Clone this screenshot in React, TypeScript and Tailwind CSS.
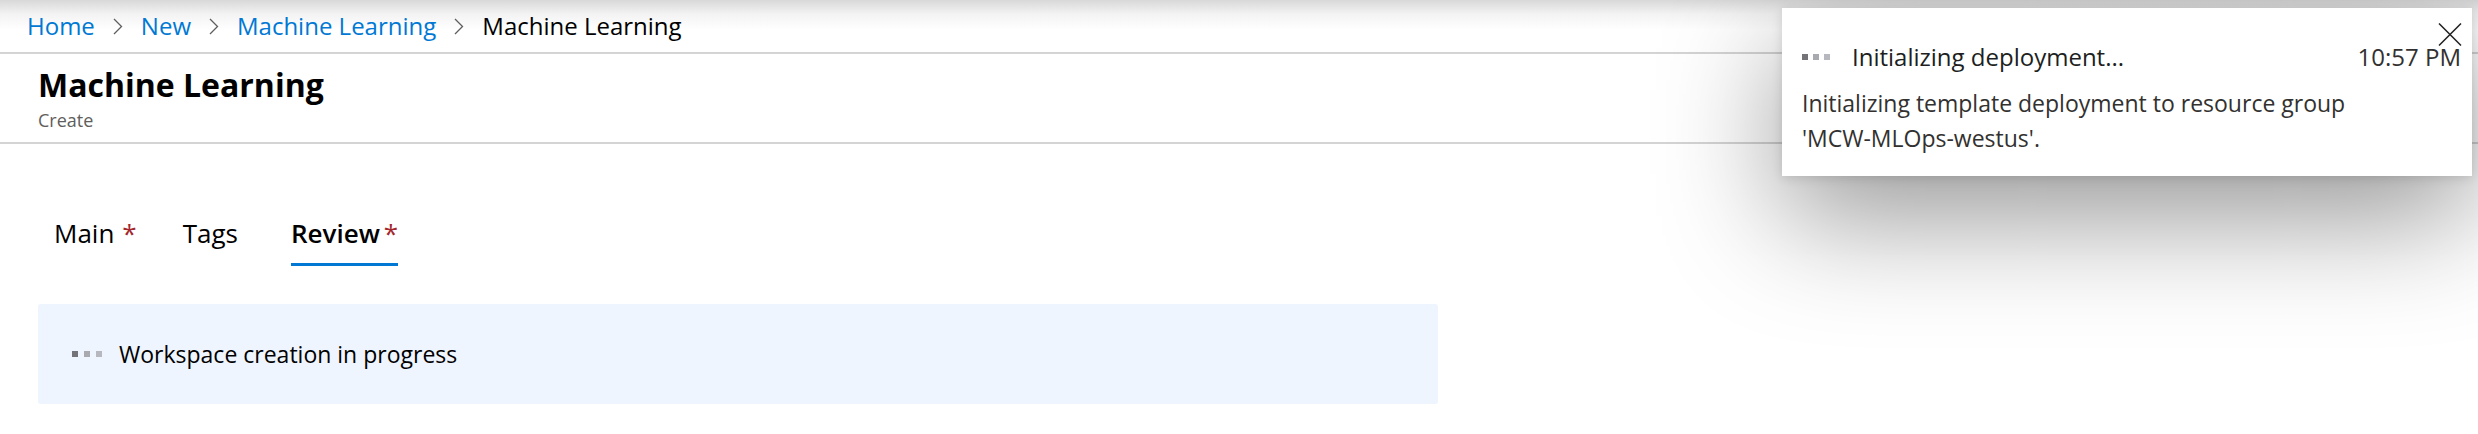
const crumbs = ["Home", "New", "Machine Learning"];

const tabs = [
  { label: "Main", required: true, active: false, cls: "", star: "ml-[8px]" },
  { label: "Tags", required: false, active: false, cls: "ml-[46px]", star: "" },
  { label: "Review", required: true, active: true, cls: "ml-[53px]", star: "ml-[4px]" },
];

function Chevron() {
  return (
    <svg width="10" height="17" viewBox="0 0 10 17" fill="none" className="shrink-0">
      <path d="M1 1 L8.5 8.5 L1 16" stroke="#605e5c" strokeWidth="1.3" />
    </svg>
  );
}

// loading indicator: three little squares, first one darker
function Dots({ size, gap }: { size: string; gap: string }) {
  return (
    <div className={`flex shrink-0 items-center ${gap}`}>
      <span className={`${size} bg-[#737378]`} />
      <span className={`${size} bg-[#a9a9b0]`} />
      <span className={`${size} bg-[#b7b8bf]`} />
    </div>
  );
}

export default function App() {
  return (
    <div className="relative h-[434px] w-full overflow-hidden bg-white font-['Open_Sans','Noto_Sans',sans-serif] text-black">
      {/* Breadcrumb */}
      <nav className="flex h-[54px] items-center gap-[18px] border-b-2 border-[#d4d4d4] bg-[linear-gradient(to_bottom,#d8d8d8_0px,#f3f3f3_14px,#ffffff_30px)] pl-[27px] text-[24px] leading-[32px]">
        {crumbs.map((c) => (
          <div key={c} className="flex items-center gap-[18px]">
            <span className="text-[#0078d4]">{c}</span>
            <Chevron />
          </div>
        ))}
        <span className="text-black">Machine Learning</span>
      </nav>

      {/* Title */}
      <header className="border-b-2 border-[#d4d4d4] pb-[10px] pl-[38px] pt-[11px]">
        <h1 className="text-[32px] font-bold leading-[40px]">Machine Learning</h1>
        <p className="mt-[3px] text-[18px] leading-[24px] text-[#605e5c]">Create</p>
      </header>

      {/* Tabs */}
      <div className="flex pl-[54px] pt-[71px]">
        {tabs.map((t) => (
          <div key={t.label} className={`flex flex-col ${t.cls}`}>
            <div className={`flex text-[26px] leading-[36px] ${t.active ? "font-semibold" : ""}`}>
              <span>{t.label}</span>
              {t.required && <span className={`font-normal text-[#a4262c] ${t.star}`}>*</span>}
            </div>
            <div className={`mt-[12px] h-[3px] ${t.active ? "bg-[#0078d4]" : "bg-transparent"}`} />
          </div>
        ))}
      </div>

      {/* Info bar */}
      <div className="ml-[38px] mt-[38px] flex h-[100px] w-[1400px] items-center rounded-[3px] bg-[#eef5fe] pl-[34px]">
        <Dots size="h-[6px] w-[6px]" gap="gap-[6px]" />
        <span className="ml-[17px] text-[23px] leading-[30px]">Workspace creation in progress</span>
      </div>

      {/* Toast */}
      <div className="absolute left-[1782px] top-[8px] h-[168px] w-[690px] bg-white pt-[31px] shadow-[0_40px_120px_rgba(0,0,0,0.42),0_2px_10px_rgba(0,0,0,0.12)]">
        <div className="flex items-center pl-[20px] pr-[11px]">
          <Dots size="h-[6px] w-[6px]" gap="gap-[5px]" />
          <span className="ml-[22px] text-[24px] leading-[36px] text-[#201f1e]">Initializing deployment...</span>
          <span className="ml-auto text-[24px] leading-[36px] text-[#323130]">10:57 PM</span>
        </div>
        <p className="mt-[11px] px-[20px] text-[23px] leading-[35px] text-[#323130]">
          Initializing template deployment to resource group
          <br />
          'MCW-MLOps-westus'.
        </p>
        <button className="absolute right-[10px] top-[15px]">
          <svg width="24" height="23" viewBox="0 0 24 23" fill="none">
            <path d="M1 0.5 L23 22.5 M23 0.5 L1 22.5" stroke="#222" strokeWidth="1.5" />
          </svg>
        </button>
      </div>
    </div>
  );
}
